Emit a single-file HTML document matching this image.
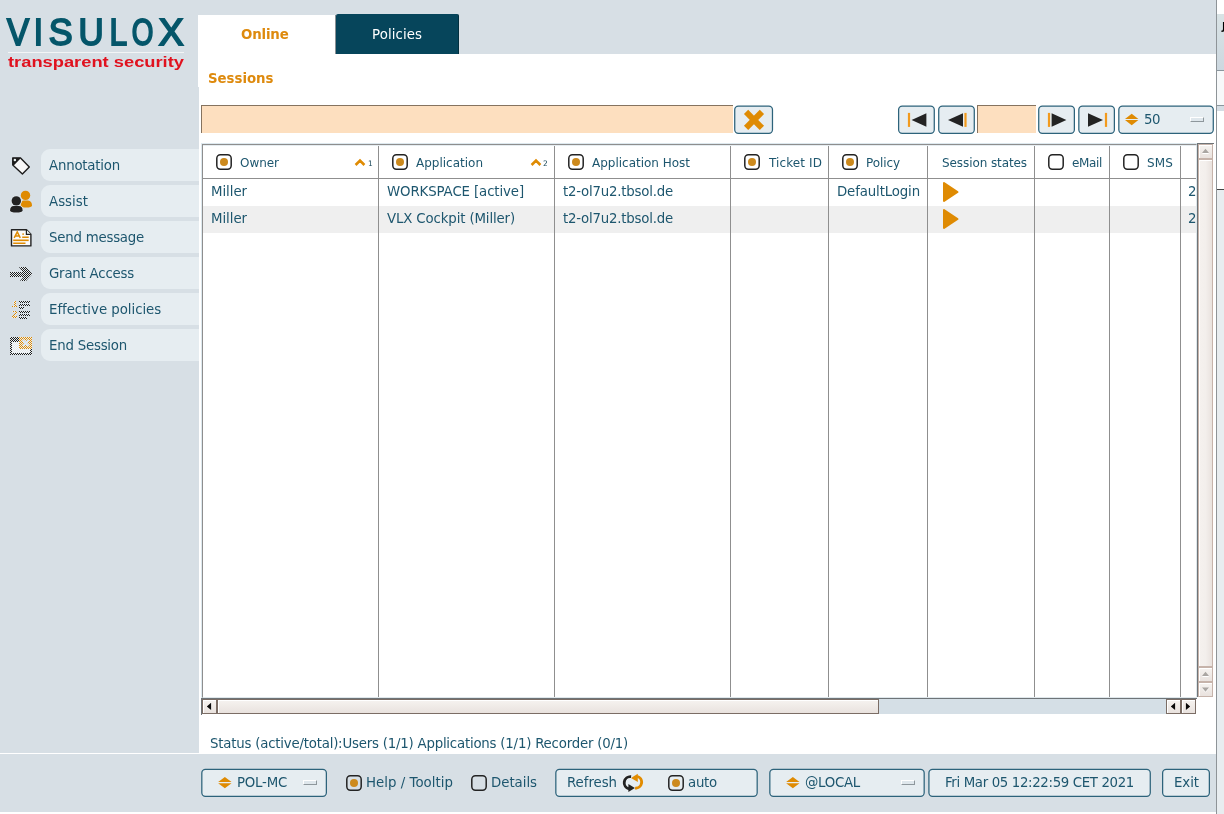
<!DOCTYPE html>
<html><head><meta charset="utf-8"><title>VISULOX</title>
<style>
html,body{margin:0;padding:0}
body{width:1224px;height:814px;position:relative;overflow:hidden;background:#d7dfe5;font-family:"DejaVu Sans","Liberation Sans",sans-serif;font-size:13.33px;color:#1d566e}
.a{position:absolute}
.t{position:absolute;white-space:nowrap;line-height:18px;will-change:transform}
.btn{position:absolute;box-sizing:border-box;border:1px solid #2d637b;border-radius:5px;background:#e6edf1}
.side{position:absolute;left:41px;width:158px;height:32px;background:#e6edf1;border-radius:9px 0 0 9px}
.vl{position:absolute;width:1px;background:#8f8f8f;top:146px;height:551px}
.rb{position:absolute;box-sizing:border-box;width:16px;height:16px;border:1.5px solid #262626;border-radius:4.5px;background:#fff}
  .rb i{position:absolute;left:2.5px;top:2.5px;width:8px;height:8px;border-radius:50%;background:#d48a1c}
.fld{position:absolute;box-sizing:border-box;background:#fddfbf;border-top:1px solid #85735f;border-left:1px solid #85735f}
.ind{position:absolute;box-sizing:border-box;width:14px;height:5px;background:#dfe7ec;border-top:1px solid #fff;border-left:1px solid #fff;border-bottom:1px solid #8e979c;border-right:1px solid #8e979c}
svg{position:absolute;overflow:visible}
</style></head><body>
<div class="a" style="left:199px;top:54px;width:1017px;height:700px;background:#fff"></div>
<div class="a" style="left:198px;top:54px;width:2px;height:33px;background:#fff"></div>
<div class="a" style="left:0;top:812px;width:1216px;height:2px;background:#fff"></div>
<div class="a" style="left:0;top:753px;width:200px;height:1px;background:#fff"></div>
<div class="a" style="left:198px;top:15px;width:137px;height:40px;background:#fff"></div>
<div class="a" style="left:335px;top:15px;width:1px;height:39px;background:#8a9094"></div>
<div class="a" style="left:336px;top:14px;width:123px;height:40px;background:#06455b;border-radius:2px 2px 0 0;box-sizing:border-box;border-right:1px solid #03303f"></div>
<svg style="left:0;top:0;will-change:transform" width="198" height="90">
<text y="44.6" font-family="Liberation Sans, sans-serif" font-size="36.9" fill="#05566a" stroke="#05566a" stroke-width="1.9" stroke-linejoin="miter"><tspan x="7.1" textLength="22.19" lengthAdjust="spacingAndGlyphs">V</tspan><tspan x="33.78" textLength="9.24" lengthAdjust="spacingAndGlyphs">I</tspan><tspan x="48.63" textLength="23.87" lengthAdjust="spacingAndGlyphs">S</tspan><tspan x="78.46" textLength="25.18" lengthAdjust="spacingAndGlyphs">U</tspan><tspan x="109.45" textLength="17.66" lengthAdjust="spacingAndGlyphs">L</tspan><tspan x="131.63" textLength="21.65" lengthAdjust="spacingAndGlyphs">O</tspan><tspan x="158.81" textLength="24.82" lengthAdjust="spacingAndGlyphs">X</tspan></text>
<rect x="8" y="52" width="176" height="1" fill="#f3f5f6"/>
<text x="8" y="67.2" font-family="Liberation Sans, sans-serif" font-weight="bold" font-size="14.6" fill="#e0121f" textLength="176" lengthAdjust="spacingAndGlyphs">transparent security</text>
</svg>
<div class="side" style="top:149px"></div>
<div class="side" style="top:185px"></div>
<div class="side" style="top:221px"></div>
<div class="side" style="top:257px"></div>
<div class="side" style="top:293px"></div>
<div class="side" style="top:329px"></div>
<svg style="left:0;top:0" width="1" height="1">
<defs>
<pattern id="ck" width="2" height="2" patternUnits="userSpaceOnUse"><rect width="2" height="2" fill="#e6edf0"/><rect x="0" y="0" width="1" height="1" fill="#1e1e1e"/><rect x="1" y="1" width="1" height="1" fill="#1e1e1e"/></pattern>
<pattern id="co" width="2" height="2" patternUnits="userSpaceOnUse"><rect width="2" height="2" fill="#e9eef2"/><rect x="0" y="0" width="1" height="1" fill="#df8b03"/><rect x="1" y="1" width="1" height="1" fill="#df8b03"/></pattern>
<pattern id="cw" width="2" height="2" patternUnits="userSpaceOnUse"><rect width="2" height="2" fill="#e4eaee"/><rect x="0" y="0" width="1" height="1" fill="#f6f8f9"/><rect x="1" y="1" width="1" height="1" fill="#f6f8f9"/></pattern>
</defs>
<!-- tag -->
<path d="M12.75 157.85 L20.3 157.85 L29.3 167.1 L22.4 174.1 L12.75 165 Z" fill="#f7f7f7" stroke="#1c1c1c" stroke-width="1.4" stroke-linejoin="round"/>
<path d="M12.75 157.85 L20.3 157.85 L20.5 158.6 L14.2 164.9 L12.75 165 Z" fill="#1c1c1c"/>
<circle cx="14.9" cy="159.9" r="1.25" fill="#eef5f5"/>
<!-- assist -->
<circle cx="25.5" cy="195.4" r="4.7" fill="#df8b03"/>
<path d="M20.7 205.6 Q20.7 200.4 24 200.4 L28 200.4 Q32 200.6 32 205.6 Q31.6 207.6 26.3 207.6 Q21 207.6 20.7 205.6 Z" fill="#df8b03"/>
<circle cx="16.3" cy="200.9" r="5.5" fill="#e2e9ee"/>
<path d="M9.5 210.6 Q9.5 205.2 13.4 205.2 L19.2 205.2 Q23.2 205.3 23.2 210.6 Q22.8 213.2 16.3 213.2 Q9.9 213.2 9.5 210.6 Z" fill="#e2e9ee"/>
<circle cx="16.3" cy="200.9" r="4.7" fill="#222"/>
<path d="M10.1 210.4 Q10.1 205.9 13.6 205.9 L19 205.9 Q22.6 206 22.6 210.4 Q22.2 212.5 16.3 212.5 Q10.5 212.5 10.1 210.4 Z" fill="#222"/>
<!-- message -->
<path d="M11.5 229.8 L26.5 229.8 L30.9 234.2 L30.9 245.9 L11.5 245.9 Z" fill="#fbfbfb" stroke="#222" stroke-width="1.4" stroke-linejoin="round"/>
<path d="M26.4 229.8 L26.4 234.3 L30.9 234.3" fill="#e6edf1" stroke="#222" stroke-width="1.2"/>
<path d="M14.2 237.9 L17.25 231.9 L20.3 237.9 M15.5 236 L19 236" stroke="#df8b03" stroke-width="1.5" fill="none"/>
<circle cx="23.1" cy="234.1" r="0.9" fill="#df8b03"/>
<rect x="22.2" y="236.5" width="6.5" height="1.5" fill="#df8b03"/>
<rect x="13.2" y="239.5" width="15.5" height="1.6" fill="#df8b03"/>
<rect x="13.2" y="242.5" width="12.3" height="1.5" fill="#df8b03"/>
<!-- grant access arrow (stippled) -->
<path d="M10 272 L23 272 L19 267 L26 267 L32 273.5 L32 274.5 L26 281 L20 281 L23.5 277 L10 277 Z" fill="url(#ck)"/>
<!-- effective policies -->
<rect x="19" y="301" width="11" height="2" fill="url(#ck)"/><rect x="19" y="304" width="11" height="2" fill="url(#ck)"/><rect x="19" y="307" width="5" height="2" fill="url(#ck)"/>
<rect x="19" y="311" width="11" height="2" fill="url(#ck)"/><rect x="19" y="314" width="11" height="2" fill="url(#ck)"/><rect x="19" y="317" width="8" height="2" fill="url(#ck)"/>
<path d="M14 301 h2 v5 h1 v1 h-5 v-1 h2 v-3 h-1 v-1 h1 Z" fill="url(#co)"/>
<path d="M12 311 h4 v1 h1 v2 h-1 v1 h-1 v1 h2 v2 h-5 v-2 h1 v-1 h1 v-1 h1 v-2 h-3 Z" fill="url(#co)"/>
<!-- end session -->
<rect x="11" y="338" width="20" height="16" fill="url(#cw)"/>
<rect x="11" y="338" width="20" height="16" fill="none" stroke="url(#ck)" stroke-width="2"/>
<rect x="10" y="337" width="9" height="5" fill="url(#ck)"/>
<rect x="19" y="337" width="13" height="12" fill="url(#co)"/>
<path d="M22.8 340 L28.8 346 M28.8 340 L22.8 346" stroke="#dde8f3" stroke-width="2.4"/>
</svg>
<div class="fld" style="left:201px;top:105px;width:532px;height:28px"></div>
<svg style="left:0;top:0" width="1" height="1"><rect x="734.73" y="106.22" width="37.75" height="27.05" rx="3.6" fill="#e6edf1" stroke="#2d637b" stroke-width="1.25"/></svg>
<svg style="left:0;top:0" width="1" height="1"><path d="M748.2 114.1 L759.8 125.8 M759.8 114.1 L748.2 125.8" stroke="#df8b03" stroke-width="6" fill="none" stroke-linecap="square"/></svg>
<svg style="left:0;top:0" width="1" height="1"><rect x="898.62" y="106.22" width="35.65" height="27.05" rx="3.6" fill="#e6edf1" stroke="#2d637b" stroke-width="1.25"/></svg>
<svg style="left:0;top:0" width="1" height="1"><rect x="938.73" y="106.22" width="35.55" height="27.05" rx="3.6" fill="#e6edf1" stroke="#2d637b" stroke-width="1.25"/></svg>
<svg style="left:0;top:0" width="1" height="1"><rect x="1038.72" y="106.22" width="35.65" height="27.05" rx="3.6" fill="#e6edf1" stroke="#2d637b" stroke-width="1.25"/></svg>
<svg style="left:0;top:0" width="1" height="1"><rect x="1078.83" y="106.22" width="35.55" height="27.05" rx="3.6" fill="#e6edf1" stroke="#2d637b" stroke-width="1.25"/></svg>
<div class="fld" style="left:977px;top:105px;width:59px;height:28px"></div>
<svg style="left:0;top:0" width="1" height="1"><rect x="907.9" y="112.9" width="2.2" height="14" fill="#f29a1d"/><path d="M911.6 120 L926.4 113.2 L926.4 126.8 Z" fill="#232323"/><path d="M948 120 L963 113.2 L963 126.8 Z" fill="#232323"/><rect x="964.4" y="112.9" width="2.2" height="14" fill="#f29a1d"/><rect x="1047.9" y="112.9" width="2.2" height="14" fill="#f29a1d"/><path d="M1066.4 120 L1051.6 113.2 L1051.6 126.8 Z" fill="#232323"/><path d="M1103 120 L1088 113.2 L1088 126.8 Z" fill="#232323"/><rect x="1104.9" y="112.9" width="2.2" height="14" fill="#f29a1d"/></svg>
<svg style="left:0;top:0" width="1" height="1"><rect x="1118.83" y="106.22" width="94.45" height="27.05" rx="3.6" fill="#e6edf1" stroke="#2d637b" stroke-width="1.25"/></svg>
<svg style="left:0;top:0" width="1" height="1"><path d="M1125.00 118.95 L1131.70 113.85 L1138.40 118.95 Z M1125.00 120.05 L1131.70 125.15 L1138.40 120.05 Z" fill="#df8b03"/></svg>
<div class="ind" style="left:1190px;top:117px"></div>
<div class="a" style="left:201px;top:143px;width:996px;height:555px;box-sizing:border-box;border:1px solid #dde8ee;background:#fff"></div>
<div class="a" style="left:202px;top:144px;width:995px;height:554px;box-sizing:border-box;border:1px solid #8e8e8e;border-right-color:#dfe7eb;border-bottom-color:#dfe7eb"></div>
<div class="a" style="left:203px;top:145px;width:993px;height:1px;background:#e6edf1"></div>
<div class="a" style="left:203px;top:206px;width:993px;height:27px;background:#efefef"></div>
<div class="a" style="left:203px;top:178px;width:993px;height:1px;background:#8f8f8f"></div>
<div class="vl" style="left:378px"></div>
<div class="vl" style="left:554px"></div>
<div class="vl" style="left:730px"></div>
<div class="vl" style="left:828px"></div>
<div class="vl" style="left:927px"></div>
<div class="vl" style="left:1034px"></div>
<div class="vl" style="left:1109px"></div>
<div class="vl" style="left:1180px"></div>
<svg style="left:216px;top:154px" width="16" height="16"><rect x="0.8" y="0.8" width="14.4" height="14.4" rx="3.6" fill="#fff" stroke="#232323" stroke-width="1.5"/><circle cx="8" cy="8" r="4" fill="#cd8a1d"/></svg>
<svg style="left:392px;top:154px" width="16" height="16"><rect x="0.8" y="0.8" width="14.4" height="14.4" rx="3.6" fill="#fff" stroke="#232323" stroke-width="1.5"/><circle cx="8" cy="8" r="4" fill="#cd8a1d"/></svg>
<svg style="left:568px;top:154px" width="16" height="16"><rect x="0.8" y="0.8" width="14.4" height="14.4" rx="3.6" fill="#fff" stroke="#232323" stroke-width="1.5"/><circle cx="8" cy="8" r="4" fill="#cd8a1d"/></svg>
<svg style="left:744px;top:154px" width="16" height="16"><rect x="0.8" y="0.8" width="14.4" height="14.4" rx="3.6" fill="#fff" stroke="#232323" stroke-width="1.5"/><circle cx="8" cy="8" r="4" fill="#cd8a1d"/></svg>
<svg style="left:842px;top:154px" width="16" height="16"><rect x="0.8" y="0.8" width="14.4" height="14.4" rx="3.6" fill="#fff" stroke="#232323" stroke-width="1.5"/><circle cx="8" cy="8" r="4" fill="#cd8a1d"/></svg>
<svg style="left:1048px;top:154px" width="16" height="16"><rect x="0.8" y="0.8" width="14.4" height="14.4" rx="3.6" fill="#fff" stroke="#232323" stroke-width="1.5"/></svg>
<svg style="left:1123px;top:154px" width="16" height="16"><rect x="0.8" y="0.8" width="14.4" height="14.4" rx="3.6" fill="#fff" stroke="#232323" stroke-width="1.5"/></svg>
<svg style="left:0;top:0" width="1" height="1"><path d="M355.6 165 L360 160.6 L364.4 165 M531.6 165 L536 160.6 L540.4 165" stroke="#df8b03" stroke-width="2.6" fill="none"/></svg>
<svg style="left:0;top:0" width="1" height="1"><path d="M944 183 L957.5 192 L944 201 Z M944 210 L957.5 219 L944 228 Z" fill="#df8b03" stroke="#df8b03" stroke-width="2" stroke-linejoin="round"/></svg>
<!-- vertical scrollbar --><div class="a" style="left:1197px;top:143px;width:17px;height:554px;background:#fff;box-sizing:border-box;border-top:1px solid #6e7478;border-left:1px solid #6e7478"></div><div class="a" style="left:1198px;top:144px;width:15px;height:15px;box-sizing:border-box;border:1px solid #c6b3aa;background:linear-gradient(#f6f3f0,#e9e2de);box-shadow:inset 1px 1px 0 #fff"></div><div class="a" style="left:1198px;top:159px;width:15px;height:508px;box-sizing:border-box;border:1px solid #c6b3aa;background:linear-gradient(90deg,#f5f1ee,#f3efec 50%,#e9e2de);box-shadow:inset 1px 1px 0 #fff"></div><div class="a" style="left:1198px;top:667px;width:15px;height:15px;box-sizing:border-box;border:1px solid #c6b3aa;background:linear-gradient(#f6f3f0,#e9e2de);box-shadow:inset 1px 1px 0 #fff"></div><div class="a" style="left:1198px;top:682px;width:15px;height:15px;box-sizing:border-box;border:1px solid #c6b3aa;background:linear-gradient(#f6f3f0,#e9e2de);box-shadow:inset 1px 1px 0 #fff"></div><svg style="left:0;top:0" width="1" height="1"><path d="M1202 154 L1205.5 150 L1209 154 Z M1202 677 L1205.5 673 L1209 677 Z M1202 688.5 L1205.5 692.5 L1209 688.5 Z" fill="#fff"/><path d="M1202 153 L1205.5 148.8 L1209 153 Z M1202 676 L1205.5 671.8 L1209 676 Z M1202 687.5 L1205.5 691.7 L1209 687.5 Z" fill="#aaa6a2"/></svg><!-- horizontal scrollbar --><div class="a" style="left:201px;top:698px;width:996px;height:17px;background:#d5dfe6;box-sizing:border-box;border-top:1px solid #6e7478;border-left:1px solid #6e7478"></div><div class="a" style="left:1196px;top:699px;width:1px;height:16px;background:#fff"></div><div class="a" style="left:201px;top:714px;width:996px;height:1px;background:#fff"></div><div class="a" style="left:201px;top:698px;width:1px;height:17px;background:#6e7478"></div><div class="a" style="left:202px;top:699px;width:15px;height:15px;box-sizing:border-box;border:1px solid #7b6d65;background:linear-gradient(#f6f3f0,#e9e2de);box-shadow:inset 1px 1px 0 #fff"></div><div class="a" style="left:217px;top:699px;width:662px;height:15px;box-sizing:border-box;border:1px solid #7b6d65;background:linear-gradient(#f6f3f0,#e9e2de);box-shadow:inset 1px 1px 0 #fff"></div><div class="a" style="left:1166px;top:699px;width:15px;height:15px;box-sizing:border-box;border:1px solid #7b6d65;background:linear-gradient(#f6f3f0,#e9e2de);box-shadow:inset 1px 1px 0 #fff"></div><div class="a" style="left:1181px;top:699px;width:15px;height:15px;box-sizing:border-box;border:1px solid #7b6d65;background:linear-gradient(#f6f3f0,#e9e2de);box-shadow:inset 1px 1px 0 #fff"></div><svg style="left:0;top:0" width="1" height="1"><path d="M206.8 706.4 L211.1 702.7 L211.1 710.1 Z M1170.8 706.4 L1175.1 702.7 L1175.1 710.1 Z M1190.2 706.4 L1185.9 702.7 L1185.9 710.1 Z" fill="#0a0a0a"/></svg>
<svg style="left:0;top:0" width="1" height="1"><rect x="201.82" y="769.33" width="124.55" height="26.95" rx="3.6" fill="#e6edf1" stroke="#2d637b" stroke-width="1.25"/></svg>
<svg style="left:0;top:0" width="1" height="1"><path d="M218.15 782.05 L224.85 776.95 L231.55 782.05 Z M218.15 783.15 L224.85 788.25 L231.55 783.15 Z" fill="#df8b03"/></svg>
<div class="ind" style="left:303px;top:780px"></div>
<svg style="left:346px;top:775px" width="16" height="16"><rect x="0.8" y="0.8" width="14.4" height="14.4" rx="3.6" fill="#d7dfe5" stroke="#232323" stroke-width="1.5"/><circle cx="8" cy="8" r="4" fill="#cd8a1d"/></svg>
<svg style="left:471px;top:775px" width="16" height="16"><rect x="0.8" y="0.8" width="14.4" height="14.4" rx="3.6" fill="#d7dfe5" stroke="#232323" stroke-width="1.5"/></svg>
<svg style="left:0;top:0" width="1" height="1"><rect x="555.83" y="769.33" width="201.35" height="26.95" rx="3.6" fill="#e6edf1" stroke="#2d637b" stroke-width="1.25"/></svg>
<svg style="left:0;top:0" width="1" height="1">
<path d="M631.09 776.64 A6.2 6.2 0 0 0 629.04 788.85" fill="none" stroke="#f2f5f6" stroke-width="4.2"/>
<path d="M631.09 776.64 A6.2 6.2 0 0 0 629.04 788.85" fill="none" stroke="#222" stroke-width="2.9"/>
<path d="M634.9 787.9 L628.4 784 L628.4 791.9 Z" fill="#222"/>
<path d="M635.05 788.10 A6.0 6.0 0 0 0 637.12 776.32" fill="none" stroke="#e28c00" stroke-width="2.9"/>
<path d="M631 777.9 L637.8 773.8 L637.8 782 Z" fill="#e28c00"/>
</svg>
<svg style="left:668px;top:775px" width="16" height="16"><rect x="0.8" y="0.8" width="14.4" height="14.4" rx="3.6" fill="#e6edf1" stroke="#232323" stroke-width="1.5"/><circle cx="8" cy="8" r="4" fill="#cd8a1d"/></svg>
<svg style="left:0;top:0" width="1" height="1"><rect x="769.83" y="769.33" width="154.35" height="26.95" rx="3.6" fill="#e6edf1" stroke="#2d637b" stroke-width="1.25"/></svg>
<svg style="left:0;top:0" width="1" height="1"><path d="M786.15 782.05 L792.85 776.95 L799.55 782.05 Z M786.15 783.15 L792.85 788.25 L799.55 783.15 Z" fill="#df8b03"/></svg>
<div class="ind" style="left:901px;top:780px"></div>
<svg style="left:0;top:0" width="1" height="1"><rect x="928.92" y="769.33" width="221.35" height="26.95" rx="3.6" fill="#e6edf1" stroke="#2d637b" stroke-width="1.25"/></svg>
<svg style="left:0;top:0" width="1" height="1"><rect x="1162.62" y="769.33" width="46.75" height="26.95" rx="3.6" fill="#e6edf1" stroke="#2d637b" stroke-width="1.25"/></svg>
<div class="a" style="left:1216px;top:0;width:8px;height:814px;background:#e8edf0"></div>
<div class="a" style="left:1217px;top:0;width:7px;height:14px;background:#fff"></div>
<div class="a" style="left:1217px;top:14px;width:7px;height:56px;background:linear-gradient(#d9e3e5,#cdd8e0)"></div>
<div class="a" style="left:1217px;top:70px;width:7px;height:1px;background:#8a969d"></div>
<div class="a" style="left:1217px;top:71px;width:7px;height:34px;background:#f7f9fa"></div>
<div class="a" style="left:1217px;top:105px;width:7px;height:1px;background:#8a969d"></div>
<div class="a" style="left:1217px;top:106px;width:7px;height:5px;background:#d5dde4"></div>
<div class="a" style="left:1217px;top:111px;width:7px;height:78px;background:#fff"></div>
<div class="a" style="left:1216px;top:189px;width:8px;height:1px;background:#444"></div>
<div class="a" style="left:1216px;top:0;width:1px;height:814px;background:#8e9498"></div>
<div class="t" style="left:1221.6px;top:18px;font-size:10.2px;font-weight:bold;color:#000;line-height:18px">J</div>

<div class="t" style="left:241.40px;top:26.00px;font-size:13.33px;letter-spacing:-0.147px;color:#de8a0d;font-weight:bold;">Online</div>
<div class="t" style="left:371.70px;top:26.00px;font-size:13.33px;letter-spacing:0.086px;color:#ffffff;">Policies</div>
<div class="t" style="left:208.20px;top:70.00px;font-size:13.33px;letter-spacing:-0.020px;color:#de8a0d;font-weight:bold;">Sessions</div>
<div class="t" style="left:48.70px;top:157.00px;font-size:13.33px;letter-spacing:-0.209px;color:#1d566e;">Annotation</div>
<div class="t" style="left:48.70px;top:193.00px;font-size:13.33px;letter-spacing:0.018px;color:#1d566e;">Assist</div>
<div class="t" style="left:48.70px;top:229.00px;font-size:13.33px;letter-spacing:-0.225px;color:#1d566e;">Send message</div>
<div class="t" style="left:48.70px;top:265.00px;font-size:13.33px;letter-spacing:-0.210px;color:#1d566e;">Grant Access</div>
<div class="t" style="left:48.70px;top:301.00px;font-size:13.33px;letter-spacing:-0.033px;color:#1d566e;">Effective policies</div>
<div class="t" style="left:48.70px;top:337.00px;font-size:13.33px;letter-spacing:-0.220px;color:#1d566e;">End Session</div>
<div class="t" style="left:239.70px;top:154.00px;font-size:12px;letter-spacing:-0.037px;color:#1d566e;">Owner</div>
<div class="t" style="left:415.80px;top:154.00px;font-size:12px;letter-spacing:-0.006px;color:#1d566e;">Application</div>
<div class="t" style="left:591.80px;top:154.00px;font-size:12px;letter-spacing:-0.012px;color:#1d566e;">Application Host</div>
<div class="t" style="left:768.50px;top:154.00px;font-size:12px;letter-spacing:0.099px;color:#1d566e;">Ticket ID</div>
<div class="t" style="left:865.90px;top:154.00px;font-size:12px;letter-spacing:-0.089px;color:#1d566e;">Policy</div>
<div class="t" style="left:942.00px;top:154.00px;font-size:12px;letter-spacing:-0.089px;color:#1d566e;">Session states</div>
<div class="t" style="left:1071.90px;top:154.00px;font-size:12px;letter-spacing:-0.353px;color:#1d566e;">eMail</div>
<div class="t" style="left:1146.90px;top:154.00px;font-size:12px;letter-spacing:0.135px;color:#1d566e;">SMS</div>
<div class="t" style="left:210.90px;top:183.00px;font-size:13.33px;letter-spacing:-0.049px;color:#1d566e;">Miller</div>
<div class="t" style="left:386.90px;top:183.00px;font-size:13.33px;letter-spacing:-0.115px;color:#1d566e;">WORKSPACE [active]</div>
<div class="t" style="left:562.90px;top:183.00px;font-size:13.33px;letter-spacing:-0.215px;color:#1d566e;">t2-ol7u2.tbsol.de</div>
<div class="t" style="left:837.20px;top:183.00px;font-size:13.33px;letter-spacing:-0.138px;color:#1d566e;">DefaultLogin</div>
<div class="t" style="left:210.90px;top:210.00px;font-size:13.33px;letter-spacing:-0.049px;color:#1d566e;">Miller</div>
<div class="t" style="left:386.90px;top:210.00px;font-size:13.33px;letter-spacing:-0.137px;color:#1d566e;">VLX Cockpit (Miller)</div>
<div class="t" style="left:562.90px;top:210.00px;font-size:13.33px;letter-spacing:-0.215px;color:#1d566e;">t2-ol7u2.tbsol.de</div>
<div class="t" style="left:1188.00px;top:183.00px;font-size:13.33px;letter-spacing:-0.484px;color:#1d566e;width:8px;overflow:hidden">2</div>
<div class="t" style="left:1188.00px;top:210.00px;font-size:13.33px;letter-spacing:-0.484px;color:#1d566e;width:8px;overflow:hidden">2</div>
<div class="t" style="left:1143.90px;top:111.00px;font-size:13.33px;letter-spacing:-0.484px;color:#1d566e;">50</div>
<div class="t" style="left:367.70px;top:155.00px;font-size:7.5px;letter-spacing:0.219px;color:#1d4a5c;">1</div>
<div class="t" style="left:542.70px;top:155.00px;font-size:7.5px;letter-spacing:0.219px;color:#1d4a5c;">2</div>
<div class="t" style="left:209.70px;top:735.00px;font-size:13.33px;letter-spacing:-0.213px;color:#1d566e;">Status (active/total):Users (1/1) Applications (1/1) Recorder (0/1)</div>
<div class="t" style="left:236.90px;top:774.00px;font-size:13.33px;letter-spacing:-0.224px;color:#1d566e;">POL-MC</div>
<div class="t" style="left:366.10px;top:774.00px;font-size:13.33px;letter-spacing:0.025px;color:#1d566e;">Help / Tooltip</div>
<div class="t" style="left:491.10px;top:774.00px;font-size:13.33px;letter-spacing:-0.031px;color:#1d566e;">Details</div>
<div class="t" style="left:567.10px;top:774.00px;font-size:13.33px;letter-spacing:-0.049px;color:#1d566e;">Refresh</div>
<div class="t" style="left:688.10px;top:774.00px;font-size:13.33px;letter-spacing:-0.250px;color:#1d566e;">auto</div>
<div class="t" style="left:804.90px;top:774.00px;font-size:13.33px;letter-spacing:-0.271px;color:#1d566e;">@LOCAL</div>
<div class="t" style="left:944.90px;top:774.00px;font-size:13.33px;letter-spacing:-0.351px;color:#1d566e;">Fri Mar 05 12:22:59 CET 2021</div>
<div class="t" style="left:1174.20px;top:774.00px;font-size:13.33px;letter-spacing:-0.062px;color:#1d566e;">Exit</div>
</body></html>
